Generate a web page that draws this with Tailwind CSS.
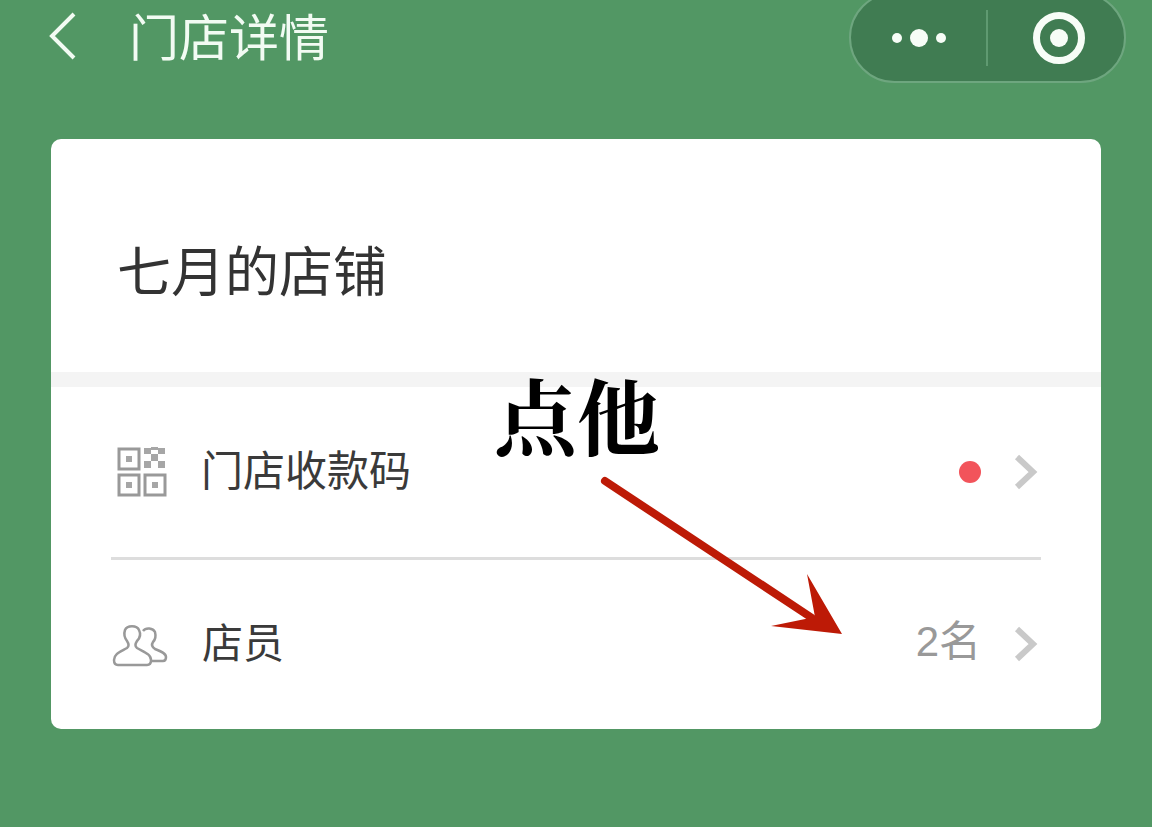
<!DOCTYPE html>
<html lang="zh-CN">
<head>
    <meta charset="UTF-8">
    <meta name="viewport" content="width=device-width, initial-scale=1.0">
    <title>门店详情</title>
    <script src="https://cdn.jsdelivr.net/npm/@tailwindcss/browser@4"></script>
</head>
<body class="bg-[#529764] h-[827px] w-[1152px] overflow-hidden relative font-['Noto_Sans_CJK_SC',sans-serif]">
    <!-- Header -->
    <div class="h-[139px] flex items-start">
        <svg class="ml-[47px] mt-[11px] shrink-0" width="32" height="50" viewBox="0 0 32 50" fill="none">
            <path d="M27 3 L5 25 L27 47" stroke="#f2fbf3" stroke-width="4" />
        </svg>
        <div class="ml-[50px] mt-[4px] text-[50px] leading-[60px] text-[#f2fbf3]">门店详情</div>
        <!-- Capsule -->
        <div class="ml-auto mr-[26px] mt-[-8px] w-[277px] h-[91px] flex items-center rounded-[46px] bg-[#407c52] border-2 border-[#6ea67f]">
            <div class="w-[137px] h-[56px] flex items-center justify-center gap-[8px] border-r-2 border-[#5f9a71]">
                <span class="w-[10px] h-[10px] rounded-full bg-[#f7fdf7]"></span>
                <span class="w-[18px] h-[18px] rounded-full bg-[#f7fdf7]"></span>
                <span class="w-[10px] h-[10px] rounded-full bg-[#f7fdf7]"></span>
            </div>
            <div class="flex-1 flex items-center justify-center mt-[1px] pl-[6px]">
                <div class="w-[52px] h-[52px] rounded-full border-[7px] border-[#f7fdf7] flex items-center justify-center">
                    <span class="w-[18px] h-[18px] rounded-full bg-[#f7fdf7]"></span>
                </div>
            </div>
        </div>
    </div>

    <!-- Card -->
    <div class="mx-[51px] w-[1050px] h-[590px] bg-white rounded-[10px] flex flex-col">
        <div class="h-[233px] pl-[66px] pt-[91px] text-[54px] leading-[78px] text-[#333333]">七月的店铺</div>
        <div class="h-[15px] bg-[#f4f4f4]"></div>

        <div class="mx-[60px] h-[173px] border-b-[3px] border-[#dddddd] flex items-center">
            <svg class="ml-[6px] shrink-0" width="50" height="50" viewBox="0 0 50 50" fill="none">
                <g stroke="#999999" stroke-width="3">
                    <rect x="2" y="2" width="20" height="20" />
                    <rect x="2" y="28" width="20" height="20" />
                    <rect x="28" y="28" width="20" height="20" />
                </g>
                <g fill="#a6a6a6">
                    <rect x="9" y="9" width="6" height="6" />
                    <rect x="9" y="35" width="6" height="6" />
                    <rect x="35" y="35" width="6" height="6" />
                    <rect x="27" y="1" width="7" height="6" />
                    <rect x="41" y="1" width="7" height="6" />
                    <rect x="34" y="7" width="7" height="7" />
                    <rect x="27" y="14" width="7" height="7" />
                    <rect x="41" y="14" width="7" height="7" />
                    <rect x="34" y="0" width="7" height="3" />
                </g>
            </svg>
            <span class="ml-[34px] mb-[8px] text-[42px] leading-[60px] text-[#3a3a3a]">门店收款码</span>
            <span class="ml-auto w-[22px] h-[22px] rounded-full bg-[#f2545b]"></span>
            <svg class="ml-[32px] mr-[2px] shrink-0" width="26" height="36" viewBox="0 0 26 36" fill="none">
                <path d="M4 3 L20 18 L4 33" stroke="#c9c9c9" stroke-width="6" />
            </svg>
        </div>

        <div class="mx-[60px] flex-1 flex items-center">
            <svg class="ml-[1px] shrink-0" width="56" height="44" viewBox="0 0 56 44" fill="none" stroke="#999999" stroke-width="2.5" stroke-linejoin="round">
                <path d="M2 37 C2 31 8 29 15 25 C17 23.500 17 21 15 18 C12 14 12 10 13 7 C15 2 25 2 27 7 C29 11 28 15 25 18 C23 21 23 23.500 25 25 C32 29 39 31 39 37 C39 41 37 42 35 42 L6 42 C3 42 2 40 2 37 Z" />
                <path d="M31 8 C34 4 41 5 43 9 C44 13 43 17 41 19 C39 22 40 24 43 26 C48 28 54 30 54 34 C54 37 53 38 51 38 L40 38" />
            </svg>
            <span class="ml-[34px] mb-[10px] text-[41px] leading-[58px] text-[#3a3a3a]">店员</span>
            <span class="ml-auto mb-[5px] text-[42px] leading-[58px] text-[#999999] font-['Liberation_Sans','Noto_Sans_CJK_SC',sans-serif]">2名</span>
            <svg class="ml-[32px] mr-[2px] mb-[2px] shrink-0" width="26" height="36" viewBox="0 0 26 36" fill="none">
                <path d="M4 3 L20 18 L4 33" stroke="#c9c9c9" stroke-width="6" />
            </svg>
        </div>
    </div>

    <!-- Annotation drawn over the screenshot -->
    <div class="absolute left-[494px] top-[363px] text-[83px] leading-[100px] font-bold text-black font-['Noto_Serif_CJK_SC','Noto_Sans_CJK_SC',serif]">点他</div>
    <svg class="absolute left-0 top-0 pointer-events-none" width="1152" height="827" viewBox="0 0 1152 827" fill="none">
        <path d="M605 481 L812 618" stroke="#bd1a06" stroke-width="8" stroke-linecap="round" />
        <path d="M807 574 L842 634 L771 626 L815 617 Z" fill="#bd1a06" />
    </svg>
</body>
</html>
